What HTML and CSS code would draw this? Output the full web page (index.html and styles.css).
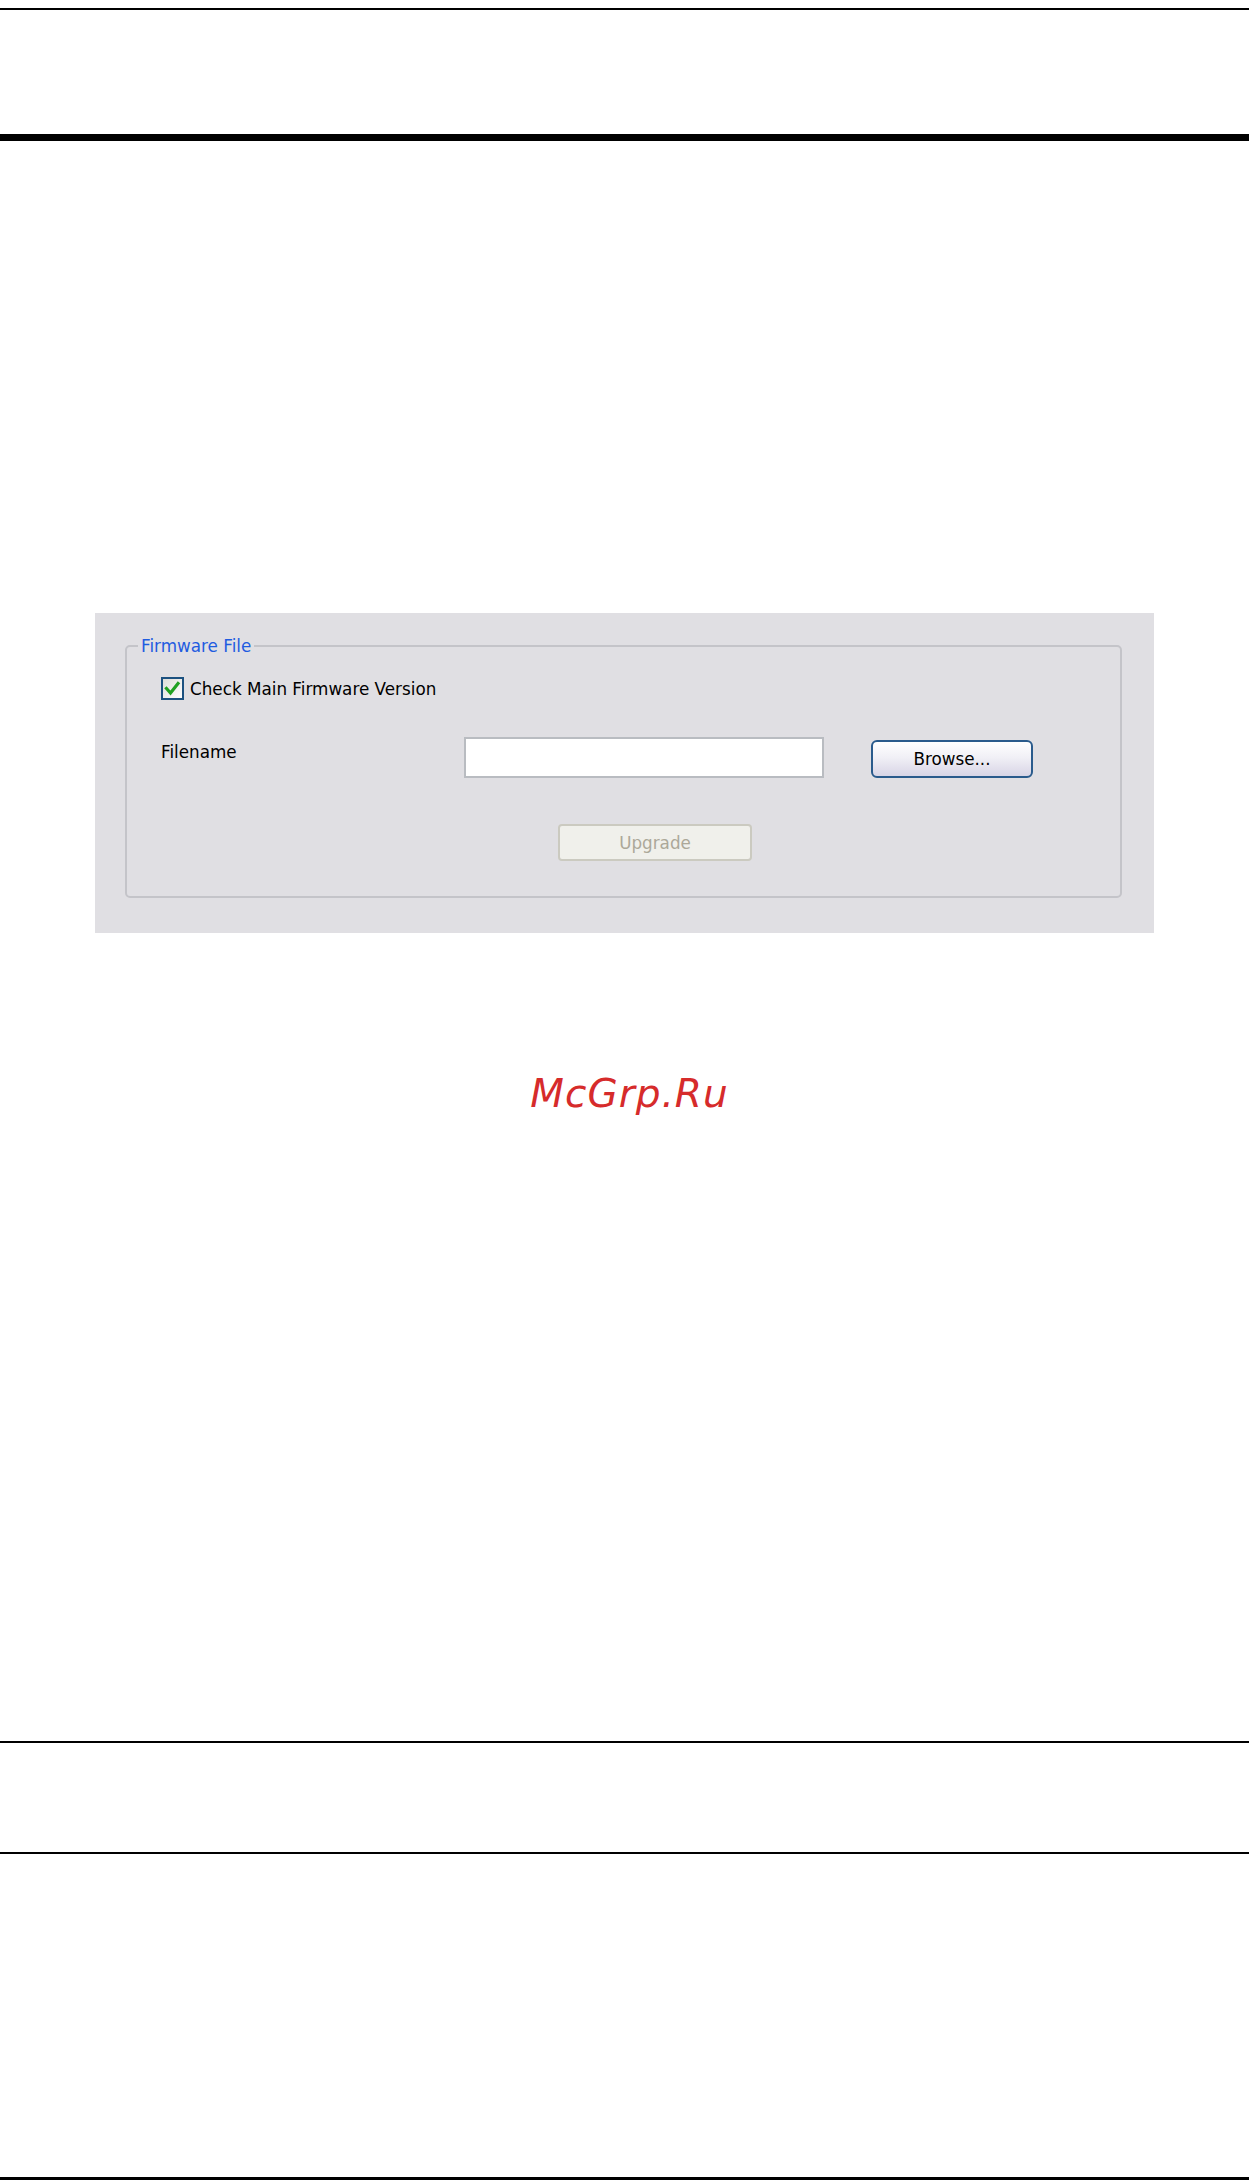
FILE: index.html
```html
<!DOCTYPE html>
<html lang="en">
<head>
<meta charset="utf-8">
<title>Firmware File</title>
<link rel="stylesheet" href="styles.css">
</head>
<body>
<div class="page">
  <div class="rule rule-top"></div>
  <div class="rule rule-thick"></div>

  <section class="panel">
    <fieldset class="group">
      <legend class="group-title">Firmware File</legend>

      <div class="row row-check">
        <svg class="checkbox" width="23" height="23" viewBox="0 0 23 23" aria-hidden="true">
          <defs>
            <linearGradient id="cbg" x1="0" y1="0" x2="1" y2="1">
              <stop offset="0" stop-color="#dcdcd7"/>
              <stop offset="1" stop-color="#ffffff"/>
            </linearGradient>
          </defs>
          <rect x="1" y="1" width="21" height="21" fill="url(#cbg)" stroke="#1c5180" stroke-width="2"/>
          <polyline points="5.5,11.5 9.5,16 17,6.5" fill="none" stroke="#21a121" stroke-width="3.2" stroke-linecap="square" stroke-linejoin="miter"/>
        </svg>
        <span class="check-label">Check Main Firmware Version</span>
      </div>

      <div class="row row-file">
        <span class="field-label">Filename</span>
        <div class="text-input"></div>
        <div class="btn btn-browse">Browse...</div>
      </div>

      <div class="row row-upgrade">
        <div class="btn btn-disabled">Upgrade</div>
      </div>
    </fieldset>
  </section>

  <div class="watermark">McGrp.Ru</div>

  <div class="rule rule-a"></div>
  <div class="rule rule-b"></div>
  <div class="rule rule-c"></div>
</div>
</body>
</html>
```

FILE: styles.css
```css
html, body {
  margin: 0;
  padding: 0;
  background: #ffffff;
}

.page {
  width: 1249px;
  font-family: "DejaVu Sans", Verdana, sans-serif;
  font-size: 16.8px;
  color: #000000;
}

.rule {
  width: 100%;
  background: #000000;
}

.rule-top {
  margin-top: 8px;
  height: 2px;
}

.rule-thick {
  margin-top: 124px;
  height: 7px;
}

.panel {
  box-sizing: border-box;
  margin-top: 472px;
  margin-left: 95px;
  width: 1059px;
  height: 320px;
  padding: 23px 32px 35px 30px;
  background: #e0dfe3;
}

.group {
  box-sizing: border-box;
  margin: 0;
  height: 262px;
  padding: 0 0 0 34px;
  border: 2px solid #c4c4c9;
  border-radius: 5px;
  min-width: 0;
}

.group-title {
  margin-left: -23px;
  padding: 0 3px;
  line-height: 20px;
  color: #1f5ce0;
}

.row {
  display: flex;
}

.row-check {
  margin-top: 21px;
  align-items: center;
  height: 23px;
  gap: 6px;
}

.checkbox {
  display: block;
  flex: none;
}

.check-label {
  line-height: 20px;
}

.row-file {
  margin-top: 37px;
  align-items: flex-start;
}

.field-label {
  width: 303px;
  margin-top: 5px;
  line-height: 20px;
}

.text-input {
  box-sizing: border-box;
  width: 360px;
  height: 41px;
  background: #ffffff;
  border: 2px solid #b9bcc1;
}

.btn {
  box-sizing: border-box;
  display: flex;
  align-items: center;
  justify-content: center;
  line-height: 20px;
}

.btn-browse {
  margin-left: 47px;
  margin-top: 3px;
  width: 162px;
  height: 38px;
  border: 2px solid #2a5b8c;
  border-radius: 6px;
  background: linear-gradient(to bottom, #ffffff 0%, #f1f0f6 45%, #d8d5e6 100%);
  color: #000000;
}

.row-upgrade {
  margin-top: 46px;
}

.btn-disabled {
  margin-left: 397px;
  width: 194px;
  height: 37px;
  border: 2px solid #cbcac0;
  border-radius: 4px;
  background: #f0f0eb;
  color: #aca899;
}

.watermark {
  margin-top: 141px;
  text-align: center;
  font-family: "DejaVu Sans", sans-serif;
  font-style: italic;
  font-size: 39px;
  line-height: 39px;
  letter-spacing: 1px;
  color: #d62b2b;
  padding-left: 10px;
}

.rule-a {
  margin-top: 628px;
  height: 2px;
}

.rule-b {
  margin-top: 109px;
  height: 2px;
}

.rule-c {
  margin-top: 323px;
  height: 3px;
}
```
